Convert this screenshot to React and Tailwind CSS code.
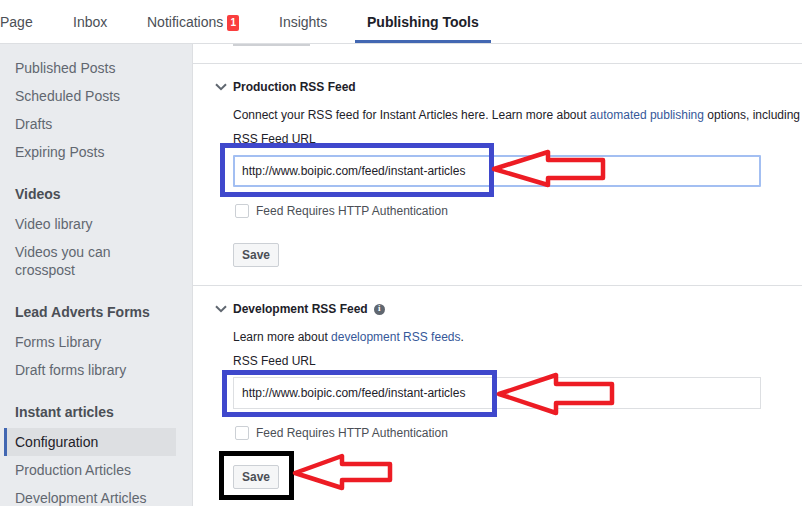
import React from "react";

function Arrow({ className, width, height, points }) {
  return (
    <svg className={className} width={width} height={height} viewBox={`0 0 ${width} ${height}`} fill="none">
      <polygon points={points} stroke="#ed1c24" strokeWidth="4.5" strokeLinejoin="round" fill="#ffffff" />
    </svg>
  );
}

function Tab({ children }) {
  return (
    <div className="h-full flex items-center px-3 border-b-[3px] border-[#4267b2] text-[#1d2129] font-bold pt-[4px]">
      {children}
    </div>
  );
}

function SideItem({ children, active, nested }) {
  const pad = nested ? "pl-[8px]" : "pl-[11px]";
  return (
    <div className={active ? "h-7 flex items-center border-l-[3px] border-[#4267b2] bg-[#dddfe2] text-[#1d2129] " + pad : "h-7 flex items-center border-l-[3px] border-transparent text-[#616770] " + pad}>
      {children}
    </div>
  );
}

function SideHead({ children, className }) {
  return <div className={"h-7 flex items-center pl-[14px] font-bold text-[#4b4f56] " + className}>{children}</div>;
}

function Chevron() {
  return (
    <svg width="12" height="8" viewBox="0 0 12 8" fill="none" className="shrink-0">
      <path d="M1 1.2 L6 6.2 L11 1.2" stroke="#606770" strokeWidth="2" />
    </svg>
  );
}

function Section({ title, info, description, focus }) {
  return (
    <section className="border-b border-[#dddfe2] pl-[22px] h-[222px] pt-[15px]">
      <div className="flex items-center h-4 gap-[6px]">
        <Chevron />
        <h3 className="font-bold text-[#1d2129] text-[12px]">{title}</h3>
        {info && (
          <span className="w-[11px] h-[11px] rounded-full bg-[#606770] text-white text-[9px] font-bold flex items-center justify-center font-['Liberation_Serif',serif]">i</span>
        )}
      </div>
      <div className="pl-[18px]">
        <p className="mt-[12px] h-4 leading-4 whitespace-nowrap text-[12px] text-[#1d2129]">{description}</p>
        <div className="mt-2 h-4 leading-4 text-[12px] text-[#1d2129]">RSS Feed URL</div>
        <div className={focus ? "mt-[8px] w-[528px] h-8 px-[7px] flex items-center rounded-[1px] border-2 border-[#a3bff2] text-[12px] text-[#1d2129]" : "mt-[8px] w-[528px] h-8 px-[8px] flex items-center border border-[#dddfe2] text-[12px] text-[#1d2129]"}>
          http://www.boipic.com/feed/instant-articles
        </div>
        <div className="mt-[16px] h-4 flex items-center text-[12px] text-[#4b4f56]">
          <span className="ml-[2px] w-[14px] h-[14px] rounded-[2px] border border-[#ccd0d5] bg-white mr-[7px]"></span>
          Feed Requires HTTP Authentication
        </div>
        <button className="mt-[24px] w-[46px] h-6 bg-[#f5f6f7] border border-[#ccd0d5] rounded-[2px] text-[12px] font-bold text-[#4b4f56]">Save</button>
      </div>
    </section>
  );
}

export default function App() {
  return (
    <div className="relative w-[802px] h-[506px] overflow-hidden bg-white font-['Liberation_Sans',Arial,sans-serif] text-[14px]">
      <header className="h-11 border-b border-[#dddfe2] flex text-[14px]">
        <div className="flex h-full">
          <div className="w-[73px] h-full pt-[1px] flex items-center text-[#4b4f56]">Page</div>
          <div className="w-[74px] h-full pt-[1px] flex items-center text-[#4b4f56]">Inbox</div>
          <div className="w-[132px] h-full pt-[1px] flex items-center text-[#4b4f56]">
            Notifications
            <span className="ml-1 w-3 h-4 mt-[1px] rounded-[2px] bg-[#fa3e3e] text-white text-[10px] font-bold flex items-center justify-center">1</span>
          </div>
          <div className="w-[76px] h-full pt-[1px] flex items-center text-[#4b4f56]">Insights</div>
          <Tab>Publishing Tools</Tab>
        </div>
      </header>
      <div className="flex h-[462px]">
        <aside className="w-[193px] shrink-0 bg-[#e9ebee] border-r border-[#dddfe2] pl-[1px] pt-[10px]">
          <div className="w-[175px]">
            <SideItem>Published Posts</SideItem>
            <SideItem>Scheduled Posts</SideItem>
            <SideItem>Drafts</SideItem>
            <SideItem>Expiring Posts</SideItem>
            <SideHead className="mt-[14px]">Videos</SideHead>
            <div className="h-[2px]"></div>
            <SideItem>Video library</SideItem>
            <div className="pl-[14px] py-[5px] leading-[18px] text-[#616770]">Videos you can<br />crosspost</div>
            <SideHead className="mt-[14px]">Lead Adverts Forms</SideHead>
            <div className="h-[2px]"></div>
            <SideItem>Forms Library</SideItem>
            <SideItem>Draft forms library</SideItem>
            <SideHead className="mt-[14px]">Instant articles</SideHead>
            <div className="h-[2px]"></div>
            <div className="ml-[3px]">
              <SideItem active nested>Configuration</SideItem>
              <SideItem nested>Production Articles</SideItem>
              <SideItem nested>Development Articles</SideItem>
            </div>
          </div>
        </aside>
        <main className="flex-1 min-w-0 overflow-hidden">
          <div className="h-5 border-b border-[#dddfe2] pl-10">
            <div className="w-[77px] h-[2px] bg-[#ced0d4]"></div>
          </div>
          <Section
            title="Production RSS Feed"
            focus
            description={<>Connect your RSS feed for Instant Articles here. Learn more about <span className="text-[#365899]">automated publishing</span> options, including how to connect your RSS feed</>}
          />
          <Section
            title="Development RSS Feed"
            info
            description={<>Learn more about <span className="text-[#365899]">development RSS feeds</span>.</>}
          />
        </main>
      </div>

      {/* annotations drawn over the screenshot */}
      <div className="absolute left-[220px] top-[143px] w-[274px] h-[54px] border-[5px] border-[#3f48cc]"></div>
      <div className="absolute left-[222px] top-[370px] w-[275px] h-[47px] border-[5px] border-[#3f48cc]"></div>
      <div className="absolute left-[219px] top-[451px] w-[75px] h-[49px] border-[5px] border-black"></div>
      <Arrow className="absolute left-[490px] top-[148px]" width="118" height="42" points="4,21 58,4 58,12 113,12 113,30 58,30 58,37" />
      <Arrow className="absolute left-[495px] top-[370px]" width="122" height="48" points="4,24 61,5 61,14 117,14 117,33 61,33 61,43" />
      <Arrow className="absolute left-[291px] top-[452px]" width="104" height="40" points="4,21 51,4 51,12 99,12 99,28 51,28 51,36" />
    </div>
  );
}
